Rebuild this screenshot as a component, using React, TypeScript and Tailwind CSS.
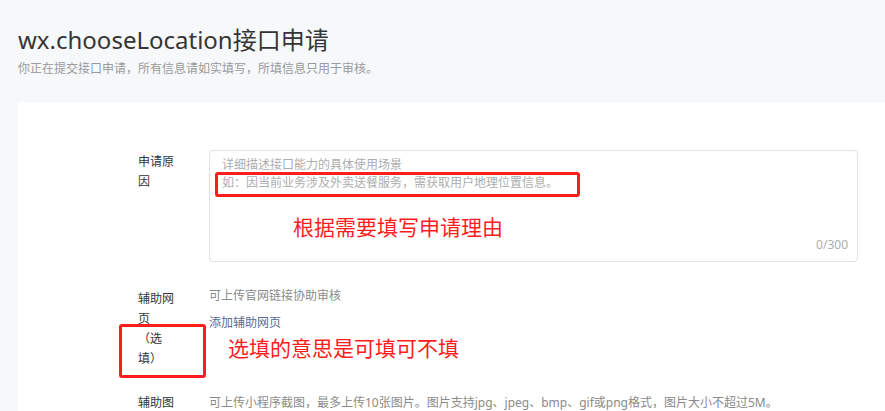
import React from "react";

const CJK = '"Segoe UI", "Noto Sans", "Noto Sans CJK SC", sans-serif';

export default function App() {
  return (
    <div
      className="min-h-[411px] w-full bg-[#f7f8fa] pl-[18px] pt-[24px] overflow-hidden"
      style={{ fontFamily: CJK }}
    >
      <h1 className="text-[24px] leading-[32px] text-[#353535] font-normal">
        wx.chooseLocation接口申请
      </h1>
      <p className="mt-[4px] text-[12px] leading-[18px] text-[#9a9a9a]">
        你正在提交接口申请，所有信息请如实填写，所填信息只用于审核。
      </p>

      <div className="relative mt-[24px] bg-white pt-[48px] pl-[120px] pb-[40px]">
        {/* Row 1 */}
        <div className="flex">
          <div className="w-[40px] mr-[31px] pt-[2px] text-[12px] leading-[20px] text-[#353535]">
            申请原因
          </div>
          <div className="relative w-[649px]">
            <textarea
              className="block h-[112px] w-full resize-none rounded-[4px] border border-[#e1e1e1] bg-white px-[12px] pt-[5px] text-[12px] leading-[18px] text-[#353535] outline-none placeholder:text-[#adadad]"
              placeholder={"详细描述接口能力的具体使用场景\n如：因当前业务涉及外卖送餐服务，需获取用户地理位置信息。"}
              style={{ fontFamily: CJK }}
            />
            <span className="absolute right-[10px] bottom-[8px] text-[12px] leading-[18px] text-[#adadad]">
              0/300
            </span>
          </div>
        </div>

        {/* Row 2 */}
        <div className="mt-[24px] flex">
          <div className="w-[40px] mr-[31px] pt-[3px] text-[12px] leading-[20px] text-[#353535]">
            <div>辅助网页</div>
            <div>（选填）</div>
          </div>
          <div className="text-[12px] leading-[20px]">
            <div className="text-[#8a8a8a]">可上传官网链接协助审核</div>
            <div className="mt-[7px] text-[#576b95]">添加辅助网页</div>
          </div>
        </div>

        {/* Row 3 */}
        <div className="mt-[21px] flex">
          <div className="w-[40px] mr-[31px] pt-[3px] text-[12px] leading-[20px] text-[#353535]">
            辅助图片
          </div>
          <div className="pt-[3px] text-[12px] leading-[20px] text-[#8a8a8a] whitespace-nowrap">
            可上传小程序截图，最多上传10张图片。图片支持jpg、jpeg、bmp、gif或png格式，图片大小不超过5M。
          </div>
        </div>

        {/* Annotations */}
        <div className="pointer-events-none absolute left-[197px] top-[70px] h-[25px] w-[365px] rounded-[3px] border-[3px] border-[#fe1c1c]" />
        <div className="pointer-events-none absolute left-[275px] top-[111px] text-[21px] leading-[28px] text-[#fe1c1c] whitespace-nowrap">
          根据需要填写申请理由
        </div>
        <div className="pointer-events-none absolute left-[101px] top-[222px] h-[54px] w-[87px] rounded-[3px] border-[3px] border-[#fe1c1c]" />
        <div className="pointer-events-none absolute left-[210px] top-[232px] text-[21px] leading-[28px] text-[#fe1c1c] whitespace-nowrap">
          选填的意思是可填可不填
        </div>
      </div>
    </div>
  );
}
